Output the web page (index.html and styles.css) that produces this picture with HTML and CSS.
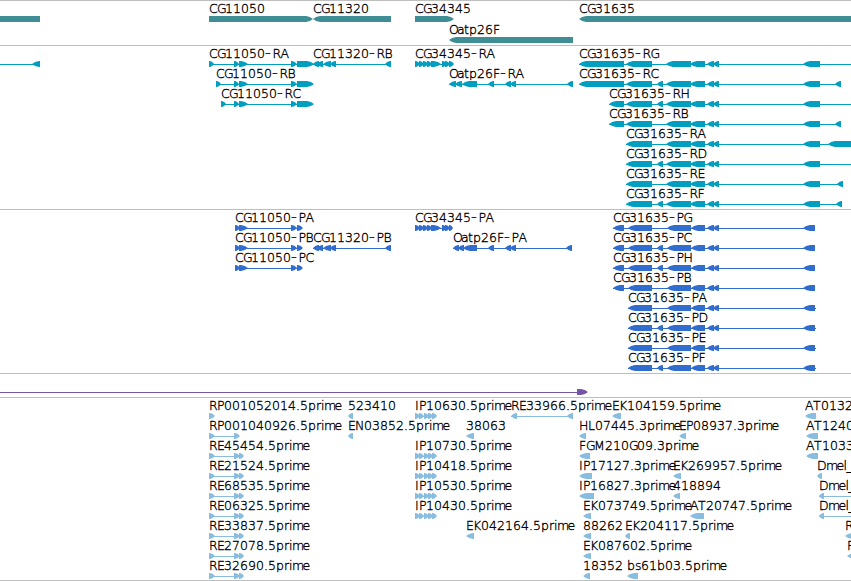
FILE: index.html
```html
<!DOCTYPE html>
<html lang="en">
<head>
<meta charset="utf-8">
<title>Genome region</title>
<link rel="stylesheet" href="styles.css">
</head>
<body>
<main class="browser" id="browser"></main>
<script src="tracks.js"></script>
</body>
</html>
```
FILE: styles.css
```css
body { margin: 0; background: #fff; }
.browser { display: flex; flex-direction: column; width: 100%; height: 581px; overflow: hidden; border-bottom: 1px solid #bebebe; box-sizing: border-box; }
.track { display: flex; flex-direction: column; flex: none; border-top: 1px solid #bebebe; padding-bottom: 3px; }
.row { display: block; flex: none; width: 100%; height: 20px; overflow: visible; }
.row text { font: 200 12.5px "DejaVu Sans", "DejaVu Sans Light", sans-serif; fill: #000; stroke: #000; stroke-width: .35px; }
.dash { font-size: 16px; }
.gene { color: #3f8e95; padding-bottom: 2px; }
.gene .row { height: 21px; }
.mrna { color: #009fc0; }
.cds { color: #316dce; }
.span { color: #7655a8; }
.est { color: #88bddf; padding-bottom: 2px; }
.exon, .intron { fill: currentColor; }
```
FILE: tracks.js
```js
// Feature: [label, first exon x, direction, [[start, end], ...], intron end (optional)]
const R = 1, L = -1;
const shift = (start) => [[start, start + 5], [234, 239], [239, 248], [291, 297], [297, 314]];
const tail = (extra) => [[626, 652], ...(extra ? [[657, 663]] : []), [666, 691], [690, 705], [707, 714], [713, 719], [803, 820]];
const ptail = (extra) => [[628, 652], ...(extra ? [[657, 663]] : []), [667, 691], [691, 705], [707, 714], [713, 719], [803, 815]];
const pa = [[235, 240], [239, 248], [291, 297], [297, 303]];
const cg11320 = [[313, 319], [317, 323], [323, 331], [330, 336], [385, 391]];
const cg34345 = (end) => [[415, 420], [419, 424], [423, 428], [427, 432], [431, 441], [442, 447], [445, 450], [449, end]];
const ip = [[415, 420], [419, 424], [424, 429], [428, 433], [432, 437]];
const re = [[209, 215], [234, 240], [239, 244]];
const est = (label, x, end) => [label, x, L, [[x, end]]];

const tracks = [
  ["gene", [
    [["", 0, 0, [[0, 40]]], ["CG11050", 209, R, [[209, 313]]], ["CG11320", 313, L, [[313, 391]]],
     ["CG34345", 415, R, [[415, 454]]], ["CG31635", 579, L, [[579, 870]]]],
    [["Oatp26F", 449, L, [[449, 573]]]]
  ]],
  ["mrna", [
    [["", 0, L, [[32, 40]]], ["CG11050-RA", 209, R, shift(209)], ["CG11320-RB", 313, L, cg11320],
     ["CG34345-RA", 415, R, cg34345(454)], ["CG31635-RG", 579, L, [[579, 624], ...tail(0)], 870]],
    [["CG11050-RB", 216, R, shift(216)],
     ["Oatp26F-RA", 449, L, [[449, 456], [455, 462], [462, 477], [488, 494], [505, 511], [510, 516], [567, 573]]],
     ["CG31635-RC", 579, L, [[579, 624], ...tail(1), [835, 841]]]],
    [["CG11050-RC", 221, R, shift(221)], ["CG31635-RH", 609, L, [[609, 624], ...tail(1)], 870]],
    [["CG31635-RB", 609, L, [[609, 624], ...tail(0), [835, 841]]]],
    [["CG31635-RA", 626, L, [...tail(0), [828, 870]]]],
    [["CG31635-RD", 626, L, tail(1), 870]],
    [["CG31635-RE", 626, L, [...tail(0), [837, 843]]]],
    [["CG31635-RF", 626, L, [...tail(1), [836, 842]]]]
  ]],
  ["cds", [
    [["CG11050-PA", 235, R, pa], ["CG34345-PA", 415, R, cg34345(453)], ["CG31635-PG", 613, L, [[613, 624], ...ptail(0)]]],
    [["CG11050-PB", 235, R, pa], ["CG11320-PB", 313, L, cg11320],
     ["Oatp26F-PA", 453, L, [[453, 459], [458, 464], [463, 477], [488, 494], [505, 511], [510, 516], [566, 572]]],
     ["CG31635-PC", 613, L, [[613, 624], ...ptail(1)]]],
    [["CG11050-PC", 235, R, pa], ["CG31635-PH", 613, L, [[613, 624], ...ptail(1)]]],
    [["CG31635-PB", 613, L, [[613, 624], ...ptail(0)]]],
    [["CG31635-PA", 628, L, ptail(0), 816]],
    [["CG31635-PD", 628, L, ptail(1), 816]],
    [["CG31635-PE", 628, L, ptail(0), 816]],
    [["CG31635-PF", 628, L, ptail(1), 816]]
  ]],
  ["span", [
    [["", 0, R, [[577, 588]]]]
  ]],
  ["est", [
    [["RP001052014.5prime", 209, R, [[209, 215]]], est("523410", 348, 353), ["IP10630.5prime", 415, R, ip],
     ["RE33966.5prime", 511, L, [[511, 517], [567, 573]]], est("EK104159.5prime", 612, 621), est("AT0132", 805, 816)],
    [["RP001040926.5prime", 209, R, [[209, 215], [234, 240]]], est("EN03852.5prime", 348, 353), est("38063", 466, 474),
     est("HL07445.3prime", 579, 586), est("EP08937.3prime", 679, 686), est("AT1240", 806, 818)],
    [["RE45454.5prime", 209, R, re], ["IP10730.5prime", 415, R, ip], est("FGM210G09.3prime", 579, 590), est("AT1033", 806, 818)],
    [["RE21524.5prime", 209, R, re], ["IP10418.5prime", 415, R, ip], est("IP17127.3prime", 579, 592),
     est("EK269957.5prime", 673, 681), est("Dmel_", 817, 822)],
    [["RE68535.5prime", 209, R, re], ["IP10530.5prime", 415, R, ip], est("IP16827.3prime", 579, 594),
     est("418894", 673, 680), ["Dmel_", 819, L, [[819, 824]], 870]],
    [["RE06325.5prime", 209, R, re], ["IP10430.5prime", 415, R, ip], est("EK073749.5prime", 583, 591),
     est("AT20747.5prime", 690, 704), ["Dmel_", 819, L, [[819, 824]], 870]],
    [["RE33837.5prime", 209, R, re], est("EK042164.5prime", 466, 474), est("88262", 583, 591),
     est("EK204117.5prime", 625, 630), est("R", 845, 870)],
    [["RE27078.5prime", 209, R, re], est("EK087602.5prime", 583, 591), est("R", 847, 870)],
    [["RE32690.5prime", 209, R, re], est("18352", 583, 590), est("bs61b03.5prime", 627, 638)]
  ]]
];

const advances = { "-": 7.5, ".": 4, P: 7, E: 7, F: 7, L: 7, I: 4, M: 11, N: 9, H: 9, D: 9, O: 8,
  a: 7, t: 5, p: 8, r: 5, i: 3, m: 10.5, e: 7, l: 3, s: 6, b: 8, _: 6 };

function label(text, x) {
  const xs = [];
  for (const ch of text) { xs.push(x); x += advances[ch] || 8; }
  return `<text x="${xs.join(" ")}" y="12">${text.replace("-", '<tspan class="dash">-</tspan>')}</text>`;
}

function exon([a, b], dir) {
  const h = Math.min(7, b - a - 1);
  let p = `${a},15 ${b},15 ${b},21 ${a},21`;
  if (dir === L) p = `${a},18 ${a + h * .45},16 ${a + h},15 ${b},15 ${b},21 ${a + h},21 ${a + h * .45},20`;
  if (dir === R) p = `${b},18 ${b - h * .45},16 ${b - h},15 ${a},15 ${a},21 ${b - h},21 ${b - h * .45},20`;
  return `<polygon class="exon" points="${p}"/>`;
}

function feature([text, x, dir, exons, end]) {
  const stop = end || exons[exons.length - 1][1];
  const line = exons.length > 1 || end || !text
    ? `<rect class="intron" x="${x}" y="18" width="${stop - x - (end ? 0 : 1)}" height="1"/>` : "";
  return line + exons.map(e => exon(e, dir)).join("") + (text ? label(text, x) : "");
}

document.getElementById("browser").innerHTML = tracks.map(([kind, rows]) =>
  `<section class="track ${kind}">${rows.map(r => `<svg class="row">${r.map(feature).join("")}</svg>`).join("")}</section>`
).join("");
```
